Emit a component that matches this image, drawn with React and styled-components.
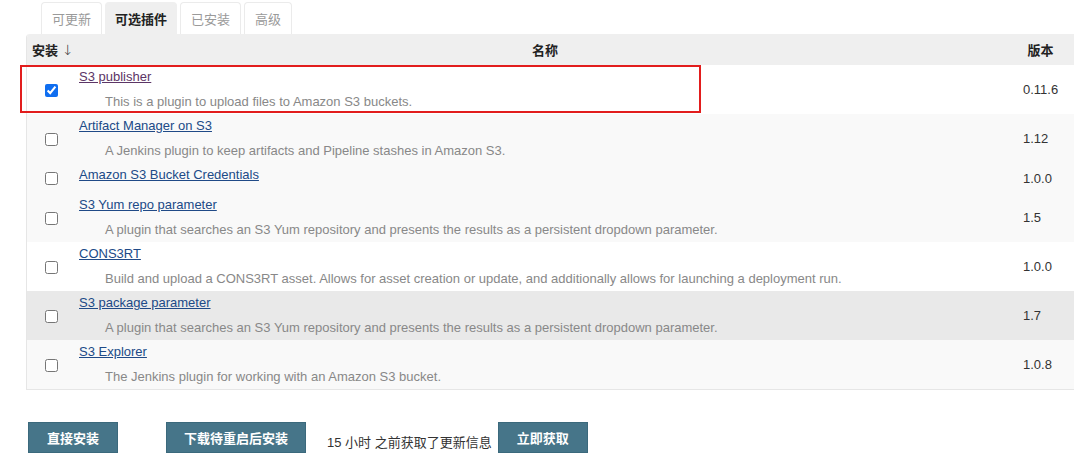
import React from 'react'
import styled, { createGlobalStyle } from 'styled-components'

const GlobalStyle = createGlobalStyle`
  body {
    margin: 0;
    background: #fff;
    font-family: "Liberation Sans", "Noto Sans CJK SC", sans-serif;
    font-size: 13px;
    color: #333;
  }
`

const Page = styled.div`
  width: 1074px;
  height: 465px;
  overflow: hidden;
  padding-top: 2px;
  box-sizing: border-box;
`

const Tabs = styled.div`
  display: flex;
  gap: 3px;
  padding-left: 41px;
`

const Tab = styled.div`
  height: 32px;
  padding: 0 ${props => props.active ? "9px" : "10px"};
  display: flex;
  align-items: center;
  box-sizing: border-box;
  border: 1px solid ${props => props.active ? "#efefef" : "#ebebeb"};
  border-bottom: none;
  border-radius: 4px 4px 0 0;
  background: ${props => props.active ? "#efefef" : "#fff"};
  color: ${props => props.active ? "#222" : "#9a9a9a"};
  font-weight: ${props => props.active ? 600 : 400};
`

const TableWrap = styled.div`
  position: relative;
  margin-left: 26px;
`

const Table = styled.table`
  width: 100%;
  border-collapse: separate;
  border-spacing: 0;
  border-left: 1px solid #e6e6e6;
  border-bottom: 1px solid #e6e6e6;
  border-radius: 4px 0 0 0;
  overflow: hidden;
`

const Th = styled.th`
  height: 31px;
  padding: 0 ${props => props.pr || "0"} 0 ${props => props.pl || "0"};
  background: #efefef;
  font-weight: 600;
  color: #222;
  text-align: ${props => props.align || "center"};
  width: ${props => props.w || "auto"};
`

const Arrow = styled.span`
  font-family: "DejaVu Sans", sans-serif;
  font-weight: 300;
  font-size: 14px;
  color: #333;
  margin-left: 4px;
`

const Row = styled.tr`
  background: ${props => props.tone === "hover" ? "#e9e9e9" : props.tone === "alt" ? "#f9f9f9" : "#fff"};
`

const CheckCell = styled.td`
  width: 48px;
  padding: 0;
  text-align: center;
  vertical-align: middle;
`

const Check = styled.input`
  width: 13px;
  height: 13px;
  margin: 4px 0 0 0;
  accent-color: #0f6ef0;
`

const NameCell = styled.td`
  padding: 1px 0 ${props => props.short ? "7px" : "2px"} 4px;
  vertical-align: top;
`

const Name = styled.div`
  line-height: 22px;
`

const Link = styled.a`
  color: ${props => props.visited ? "#5c3566" : "#204a87"};
  text-decoration: underline;
`

const Desc = styled.div`
  margin-top: 3px;
  line-height: 21px;
  padding-left: 26px;
  color: #888;
`

const VersionCell = styled.td`
  width: 51px;
  padding: 0 0 0 8px;
  vertical-align: middle;
  color: #333;
`

const Highlight = styled.div`
  position: absolute;
  left: -6px;
  top: 31px;
  width: 681px;
  height: 48px;
  border: 2px solid #e21d1d;
  box-sizing: border-box;
  pointer-events: none;
`

const Footer = styled.div`
  display: flex;
  align-items: flex-end;
  margin-top: 32px;
  padding-left: 28px;
`

const Button = styled.button`
  height: 31px;
  min-width: 90px;
  padding: 0 17px;
  background: #467589;
  border: 1px solid #3b697c;
  color: #fff;
  font-family: inherit;
  font-size: 13px;
  font-weight: 600;
  margin-left: ${props => props.gap || "0"};
`

const Info = styled.span`
  margin-left: 21px;
  line-height: 18px;
  padding-bottom: 1px;
  color: #333;
`

const plugins = [
  { name: "S3 publisher", desc: "This is a plugin to upload files to Amazon S3 buckets.", version: "0.11.6", checked: true, visited: true },
  { name: "Artifact Manager on S3", desc: "A Jenkins plugin to keep artifacts and Pipeline stashes in Amazon S3.", version: "1.12", tone: "alt" },
  { name: "Amazon S3 Bucket Credentials", desc: "", version: "1.0.0", tone: "alt" },
  { name: "S3 Yum repo parameter", desc: "A plugin that searches an S3 Yum repository and presents the results as a persistent dropdown parameter.", version: "1.5", tone: "alt" },
  { name: "CONS3RT", desc: "Build and upload a CONS3RT asset. Allows for asset creation or update, and additionally allows for launching a deployment run.", version: "1.0.0" },
  { name: "S3 package parameter", desc: "A plugin that searches an S3 Yum repository and presents the results as a persistent dropdown parameter.", version: "1.7", tone: "hover" },
  { name: "S3 Explorer", desc: "The Jenkins plugin for working with an Amazon S3 bucket.", version: "1.0.8", tone: "alt" },
]

const App = () => {
  return (
    <Page>
      <GlobalStyle />
      <Tabs>
        <Tab>可更新</Tab>
        <Tab active>可选插件</Tab>
        <Tab>已安装</Tab>
        <Tab>高级</Tab>
      </Tabs>
      <TableWrap>
        <Table>
          <thead>
            <tr>
              <Th align="left" pl="5px" w="43px">安装<Arrow>↓</Arrow></Th>
              <Th>名称</Th>
              <Th pr="8px" w="51px">版本</Th>
            </tr>
          </thead>
          <tbody>
            {plugins.map(p => (
              <Row key={p.name} tone={p.tone}>
                <CheckCell><Check type="checkbox" defaultChecked={p.checked} /></CheckCell>
                <NameCell short={!p.desc}>
                  <Name><Link href="#" visited={p.visited}>{p.name}</Link></Name>
                  {p.desc && <Desc>{p.desc}</Desc>}
                </NameCell>
                <VersionCell>{p.version}</VersionCell>
              </Row>
            ))}
          </tbody>
        </Table>
        <Highlight />
      </TableWrap>
      <Footer>
        <Button>直接安装</Button>
        <Button gap="48px">下载待重启后安装</Button>
        <Info>15 小时 之前获取了更新信息</Info>
        <Button gap="6px">立即获取</Button>
      </Footer>
    </Page>
  )
}

export default App
